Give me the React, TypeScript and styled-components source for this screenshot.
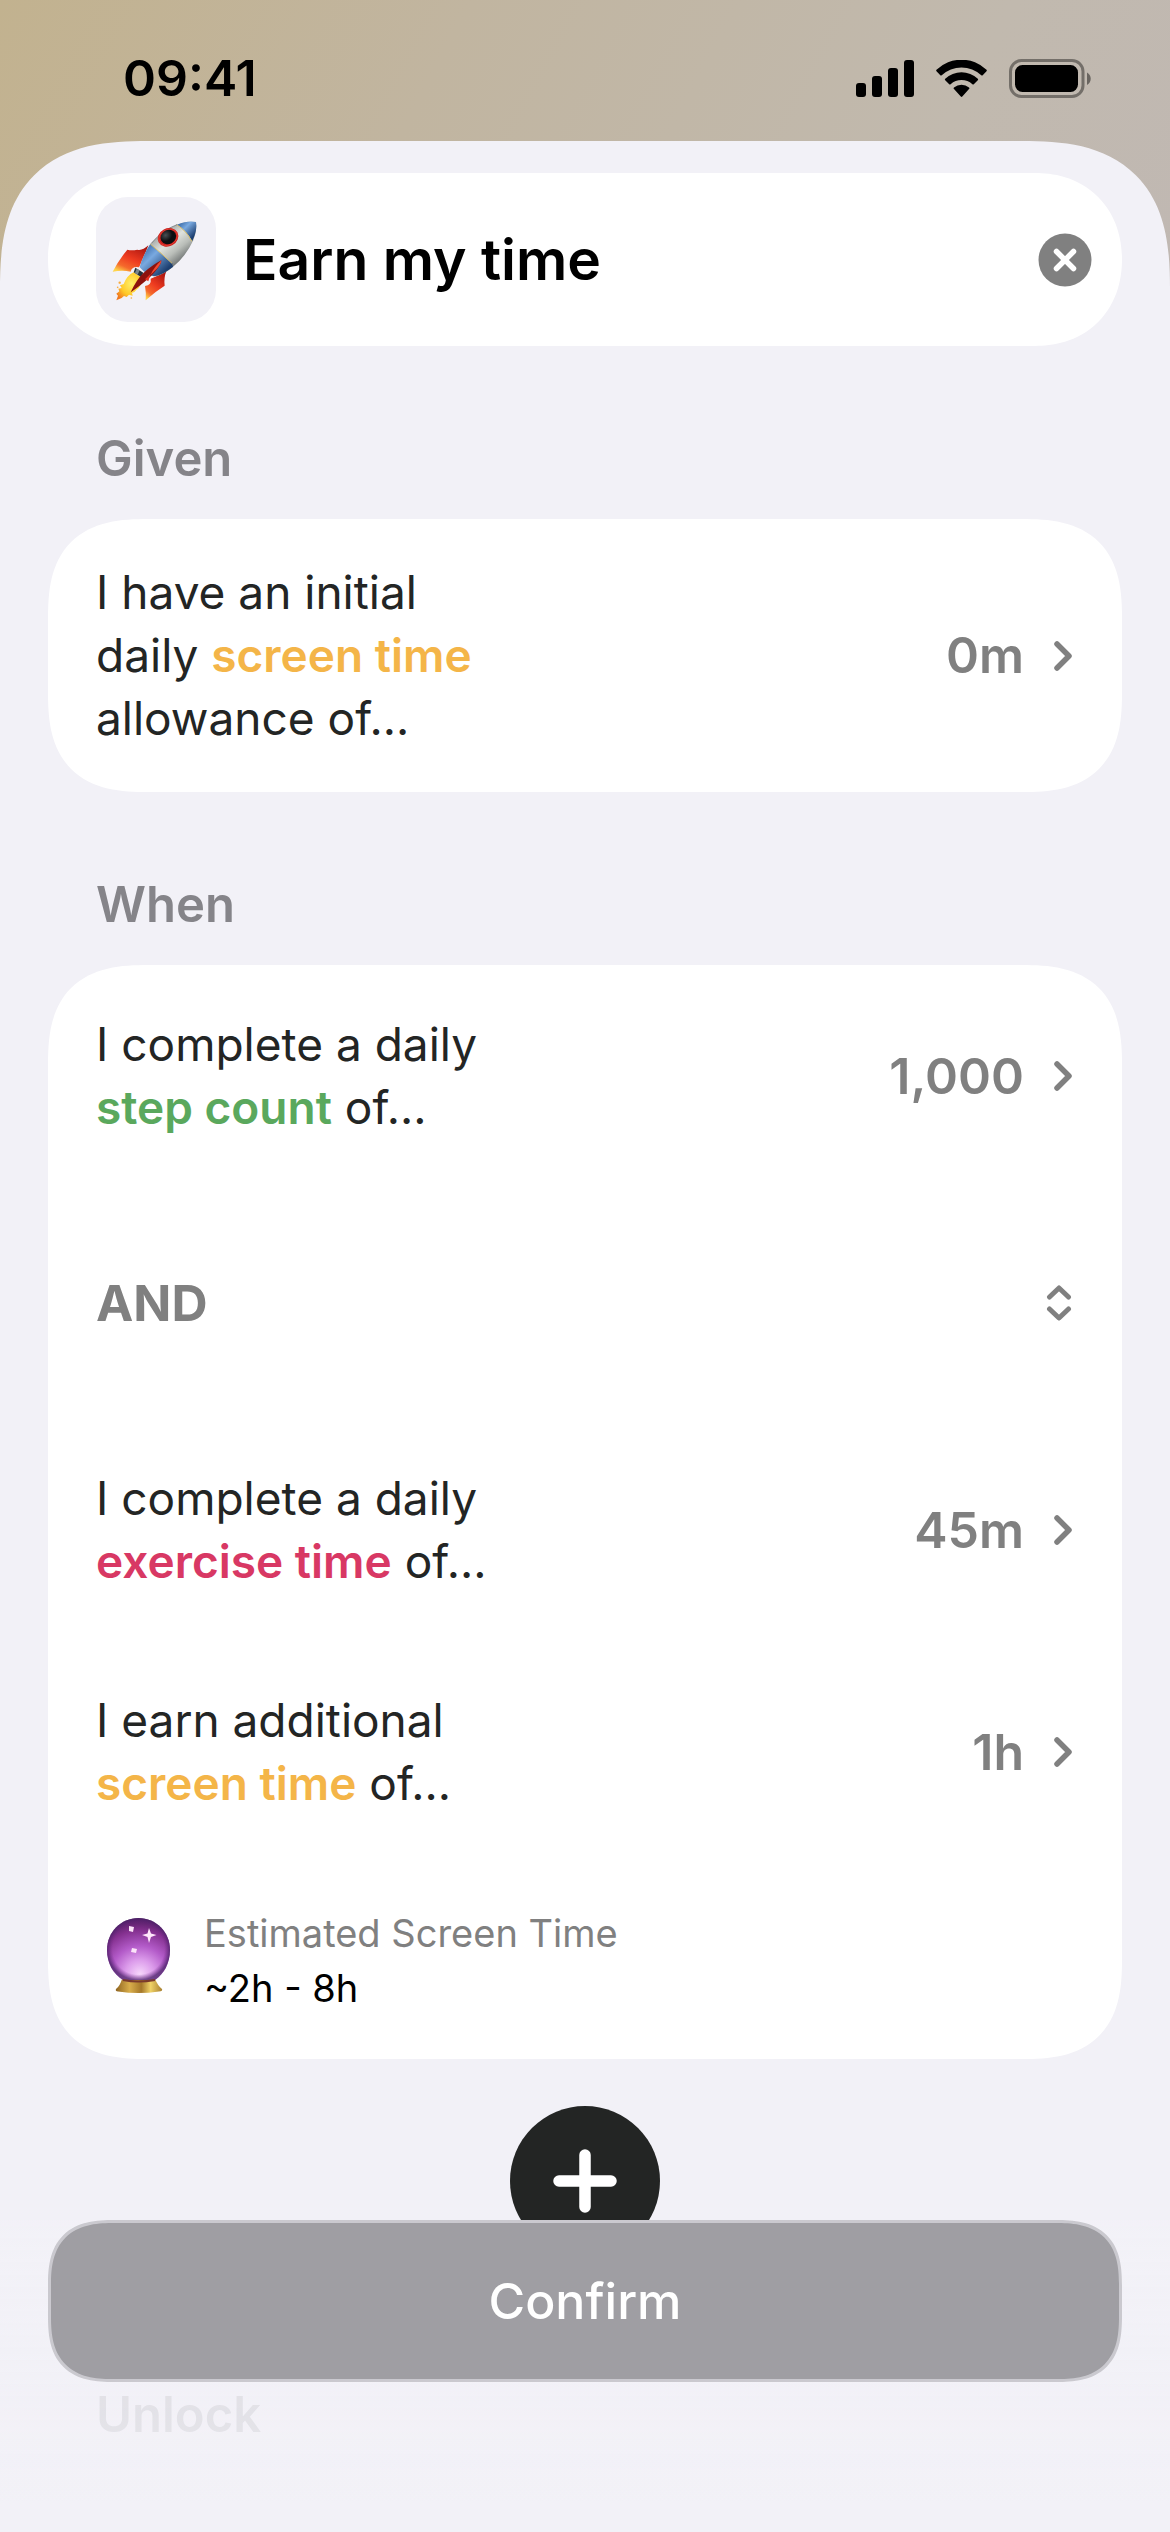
import { useState } from "react";
import type { ReactNode } from "react";
import styled, { createGlobalStyle } from "styled-components";

const GlobalStyle = createGlobalStyle`
  * {
    box-sizing: border-box;
  }

  body {
    margin: 0;
    background-color: #f2f1f7;
    font-family: "Inter", "Liberation Sans", sans-serif;
    -webkit-font-smoothing: antialiased;
  }

  button, input, select {
    margin: 0;
    padding: 0;
    border: none;
    background: none;
    font-family: inherit;
    color: inherit;
  }
`;

const Screen = styled.div`
  display: flex;
  flex-direction: column;
  height: 100vh;
  overflow: hidden;
  background: linear-gradient(118deg, #c2b28f 0%, #c1b5a0 35%, #c1b9ae 75%, #c0b8b3 100%) top / 100% 340px no-repeat;
`;

const StatusBar = styled.header`
  display: flex;
  flex: none;
  align-items: center;
  justify-content: space-between;
  height: 141px;
  padding: 15px 78px 0 123px;
  color: #000000;
`;

const Time = styled.time`
  font-size: 50px;
  font-weight: 600;
  line-height: 61px;
`;

const StatusIcons = styled.div`
  display: flex;
  align-items: center;
  gap: 22px;
`;

const Sheet = styled.main`
  flex: 1;
  min-height: 0;
  overflow: hidden;
  padding: 32px 48px 0;
  border-radius: 112px 112px 0 0;
  background-color: #f2f1f7;

  /* smoother, iOS-like corners where the browser has them */
  @supports (corner-shape: squircle) {
    border-radius: 148px 148px 0 0;
    corner-shape: superellipse(1.4);
  }
`;

const Card = styled.div`
  border-radius: 78px;
  background-color: #ffffff;

  @supports (corner-shape: squircle) {
    border-radius: 100px;
    corner-shape: superellipse(1.4);
  }
`;

const TitleCard = styled(Card)`
  display: flex;
  align-items: center;
  padding: 24px 30px 24px 48px;

  @supports (corner-shape: squircle) {
    corner-shape: superellipse(1.1);
  }
`;

const EmojiButton = styled.button`
  display: flex;
  flex: none;
  align-items: center;
  justify-content: center;
  width: 120px;
  height: 125px;
  border-radius: 32px;
  background-color: #f2f1f7;
`;

const TitleInput = styled.input`
  flex: 1;
  min-width: 0;
  margin-left: 27px;
  color: #000000;
  font-size: 57px;
  font-weight: 600;
  line-height: 72px;
  outline: none;
`;

const ClearButton = styled.button`
  display: flex;
  flex: none;
`;

const SectionTitle = styled.h2`
  margin: 0;
  padding: 82px 48px 30px;
  color: #858489;
  font-size: 49px;
  font-weight: 600;
  line-height: 61px;
`;

const Row = styled.button<{ $padding?: number }>`
  display: flex;
  align-items: center;
  justify-content: space-between;
  width: 100%;
  padding: ${({ $padding = 48 }) => $padding}px 48px;
  text-align: left;
`;

const RowText = styled.span`
  color: #232524;
  font-size: 46px;
  line-height: 63px;
`;

const Highlight = styled.span<{ $color: string }>`
  color: ${({ $color }) => $color};
  font-weight: 600;
`;

const RowValue = styled.span`
  display: flex;
  align-items: center;
  gap: 30px;
  color: #808080;
  font-size: 50px;
  font-weight: 600;
  line-height: 61px;
`;

const OperatorRow = styled.label`
  display: flex;
  align-items: center;
  height: 232px;
  padding: 0 50px 0 48px;
  color: #808080;
`;

const OperatorSelect = styled.select`
  flex: 1;
  appearance: none;
  font-size: 50px;
  font-weight: 700;
  line-height: 61px;
  outline: none;
`;

const Estimate = styled.div`
  display: flex;
  align-items: center;
  gap: 24px;
  padding: 43px 48px;
`;

const EstimateText = styled.p<{ $muted?: boolean }>`
  margin: 0;
  color: ${({ $muted }) => ($muted ? "#808080" : "#000000")};
  font-size: 38px;
  line-height: 55px;
`;

const AddButton = styled.button`
  display: flex;
  align-items: center;
  justify-content: center;
  width: 150px;
  height: 150px;
  margin: 47px auto 46px;
  border-radius: 50%;
  background-color: #232524;
`;

const LockedCard = styled(Card)`
  height: 274px;
`;

const Footer = styled.footer`
  position: fixed;
  right: 0;
  bottom: 0;
  left: 0;
  padding: 0 48px 150px;
  background: linear-gradient(rgba(242, 241, 247, 0.8), rgba(242, 241, 247, 0.87) 70%, #f2f1f7 90%);
`;

const ConfirmButton = styled.button`
  display: block;
  width: 100%;
  height: 162px;
  border: 3px solid #cac9cf;
  border-radius: 52px;
  background-color: #9f9ea3;
  color: #ffffff;
  font-size: 50px;
  font-weight: 500;

  @supports (corner-shape: squircle) {
    border-radius: 66px;
    corner-shape: superellipse(1.4);
  }
`;

const SignalIcon = () => (
  <svg width="58" height="37" viewBox="0 0 58 37" aria-hidden="true">
    <rect x="0" y="23" width="10" height="14" rx="3" />
    <rect x="16" y="16" width="10" height="21" rx="3" />
    <rect x="32" y="8" width="10" height="29" rx="3" />
    <rect x="48" y="0" width="10" height="37" rx="3" />
  </svg>
);

const WifiIcon = () => (
  <svg width="51" height="37" viewBox="0 0 51 37" aria-hidden="true">
    <path d="M.5 11.2a1 1 0 0 1 0-1.4 36 36 0 0 1 50 0 1 1 0 0 1 0 1.4l-3.8 4a1 1 0 0 1-1.400 0 29 29 0 0 0-39.600 0 1 1 0 0 1-1.400 0z" />
    <path d="M9.200 20.200a1 1 0 0 1 0-1.500 24 24 0 0 1 32.600 0 1 1 0 0 1 0 1.500l-4 4a1 1 0 0 1-1.400 0 16.500 16.500 0 0 0-21.800 0 1 1 0 0 1-1.400 0z" />
    <path d="M18 29a1 1 0 0 1 0-1.500 11.800 11.800 0 0 1 15 0 1 1 0 0 1 0 1.500l-6.700 7.500a1 1 0 0 1-1.500 0z" />
  </svg>
);

const BatteryIcon = () => (
  <svg width="83" height="39" viewBox="0 0 83 39" aria-hidden="true">
    <rect x="1.500" y="1.500" width="72.500" height="36" rx="11" fill="none" stroke="#000" strokeOpacity="0.4" strokeWidth="3" />
    <rect x="6" y="6" width="63" height="27" rx="7.500" />
    <path d="M78 13.500c5 2.500 5 10 0 12.500z" fillOpacity="0.45" />
  </svg>
);

const RocketIcon = () => (
  <svg width="89" height="84" viewBox="95 114 267 252" aria-hidden="true">
    <defs>
      <linearGradient id="hull" x1="0.25" y1="0.2" x2="0.75" y2="0.8">
        <stop offset="0" stopColor="#8c9190" />
        <stop offset="0.4" stopColor="#dfe2dd" />
        <stop offset="0.65" stopColor="#b9bdb8" />
        <stop offset="1" stopColor="#555a5b" />
      </linearGradient>
      <linearGradient id="blue" x1="0.1" y1="0.1" x2="0.8" y2="0.8">
        <stop offset="0" stopColor="#3a6aa8" />
        <stop offset="0.4" stopColor="#79a9e0" />
        <stop offset="1" stopColor="#1d3f70" />
      </linearGradient>
      <linearGradient id="fin" x1="0.8" y1="0" x2="0.2" y2="1">
        <stop offset="0" stopColor="#a81410" />
        <stop offset="0.5" stopColor="#ee3b20" />
        <stop offset="0.8" stopColor="#f56a2c" />
        <stop offset="1" stopColor="#ffd44a" />
      </linearGradient>
      <radialGradient id="flame" cx="0.6" cy="0.4" r="0.7">
        <stop offset="0" stopColor="#fff06a" />
        <stop offset="0.6" stopColor="#ffc928" />
        <stop offset="1" stopColor="#f0761f" />
      </radialGradient>
      <radialGradient id="glass" cx="0.4" cy="0.3" r="0.7">
        <stop offset="0" stopColor="#4a5054" />
        <stop offset="0.6" stopColor="#0c0e10" />
      </radialGradient>
    </defs>
    <path d="M204 196Q186 213 171 209Q154 213 141 209Q116 239 97 275Q126 270 151 275Q155 258 176 262Q190 236 204 196Z" fill="url(#fin)" />
    <path d="M235 286Q252 278 258 273Q250 294 253 317Q224 335 196 361Q198 339 194 318Q214 315 211 296Z" fill="url(#fin)" />
    <path d="M160 277L184 293Q186 317 168 329Q162 339 155 338L157 347L146 344L139 351L131 348L124 354L108 361L113 347L108 341L117 334L114 326L124 324L119 316L130 312Q140 286 160 277Z" fill="url(#flame)" />
    <circle cx="118" cy="308" r="3.500" fill="#f9a93a" />
    <circle cx="112" cy="322" r="2.500" fill="#f9a93a" />
    <circle cx="153" cy="354" r="2.500" fill="#f9a93a" />
    <path d="M165 263L189 278L183 292L160 277Z" fill="#26323b" />
    <path d="M169 266L178 271L172 284L164 278Z" fill="#78868e" />
    <path d="M290 134Q325 120 347 126Q352 150 339 181Q316 231 275 263Q247 285 221 289Q198 284 178 262Q188 225 210 192Q250 149 290 134Z" fill="url(#hull)" />
    <path d="M210 192L275 250L278 260Q247 285 221 289Q198 284 178 262Q188 225 210 192Z" fill="url(#blue)" />
    <path d="M290 134Q325 120 347 126Q352 150 336 183Q318 151 290 134Z" fill="url(#blue)" />
    <path d="M210 192Q242 219 275 250M288 134Q318 151 334 184" fill="none" stroke="#d8bd69" strokeWidth="3" />
    <path d="M213 190Q246 150 290 134" fill="none" stroke="#5b6063" strokeWidth="2" />
    <ellipse cx="263" cy="172" rx="32" ry="27" transform="rotate(-28 263 172)" fill="#c9201c" />
    <ellipse cx="263" cy="172" rx="29" ry="23" transform="rotate(-28 263 172)" fill="none" stroke="#f0473a" strokeWidth="2" />
    <ellipse cx="264" cy="171" rx="24" ry="21" transform="rotate(-28 264 171)" fill="url(#glass)" />
    <path d="M243 241Q243 252 229 269Q211 294 151 337Q168 299 190 278Q218 254 243 241Z" fill="#8d120d" />
    <path d="M243 241Q243 252 229 267L211 284Q220 263 243 241Z" fill="#f04a31" />
    <path d="M194 298L211 281L204 304Z" fill="#e53121" />
  </svg>
);

const CrystalBallIcon = () => (
  <svg width="84" height="86" viewBox="0 0 84 86" aria-hidden="true">
    <defs>
      <radialGradient id="ball" cx="0.52" cy="0.9" r="0.9">
        <stop offset="0" stopColor="#f6d6fb" />
        <stop offset="0.25" stopColor="#dc9ceb" />
        <stop offset="0.5" stopColor="#b35bc9" />
        <stop offset="0.78" stopColor="#84308f" />
        <stop offset="1" stopColor="#4c1c5e" />
      </radialGradient>
      <radialGradient id="rim" cx="0.5" cy="0.5" r="0.5">
        <stop offset="0.82" stopColor="#6b2585" stopOpacity="0" />
        <stop offset="1" stopColor="#4a2268" stopOpacity="0.75" />
      </radialGradient>
      <linearGradient id="stand" x1="0" x2="1">
        <stop offset="0" stopColor="#8f6420" />
        <stop offset="0.3" stopColor="#d9ae4b" />
        <stop offset="0.55" stopColor="#a5782a" />
        <stop offset="0.75" stopColor="#f0d267" />
        <stop offset="1" stopColor="#a98030" />
      </linearGradient>
    </defs>
    <path d="M26 61h33q3 7 7 10q1 2-3 2.500q-20 3-41 0q-3-.5-2-2.500q4-3 6-10z" fill="url(#stand)" />
    <path d="M42.500 0C60 0 74 14 74 32c0 13-6 24-15 30H27C17 56 11 45 11 32 11 14 25 0 42.500 0z" fill="url(#ball)" />
    <path d="M42.500 0C60 0 74 14 74 32c0 13-6 24-15 30H27C17 56 11 45 11 32 11 14 25 0 42.500 0z" fill="url(#rim)" />
    <path d="M27 62q15 3 32 0" fill="none" stroke="#7b3a2c" strokeWidth="2" />
    <path d="M53 10l2 5.500 5.500 1.500-5.500 2-2 6-1.500-6-5.500-2 5.500-1.500z" fill="#ffe6fb" />
    <path d="M33 8l5 1-1 5-4-1zM36 30l5 1-1 4-5-1z" fill="#fbe3f8" />
  </svg>
);

const ChevronRight = () => (
  <svg width="20" height="30" viewBox="0 0 20 30" fill="none" aria-hidden="true">
    <path d="M3 3l12 12L3 27" stroke="#808080" strokeWidth="5.500" strokeLinecap="round" strokeLinejoin="round" />
  </svg>
);

const ChevronUpDown = () => (
  <svg width="26" height="36" viewBox="0 0 26 36" fill="none" aria-hidden="true">
    <path d="M3.500 12L13 3l9.500 9M3.500 24l9.500 9 9.500-9" stroke="#808080" strokeWidth="5" strokeLinecap="round" strokeLinejoin="round" />
  </svg>
);

const ClearIcon = () => (
  <svg width="54" height="54" viewBox="0 0 54 54" aria-hidden="true">
    <circle cx="27" cy="27" r="26.500" fill="#808080" />
    <path d="M18.500 18.500l17 17M35.500 18.500l-17 17" stroke="#fff" strokeWidth="5.500" strokeLinecap="round" />
  </svg>
);

const PlusIcon = () => (
  <svg width="64" height="64" viewBox="0 0 64 64" aria-hidden="true">
    <path d="M32 6v52M6 32h52" stroke="#fff" strokeWidth="11.500" strokeLinecap="round" />
  </svg>
);

type ConditionProps = {
  children: ReactNode;
  value: string;
  padding?: number;
};

const Condition = ({ children, value, padding }: ConditionProps) => (
  <Row type="button" $padding={padding}>
    <RowText>{children}</RowText>
    <RowValue>
      {value}
      <ChevronRight />
    </RowValue>
  </Row>
);

const App = () => {
  const [title, setTitle] = useState("Earn my time");
  const [operator, setOperator] = useState("AND");

  return (
    <Screen>
      <GlobalStyle />
      <StatusBar>
        <Time>09:41</Time>
        <StatusIcons>
          <SignalIcon />
          <WifiIcon />
          <BatteryIcon />
        </StatusIcons>
      </StatusBar>
      <Sheet>
        <TitleCard>
          <EmojiButton type="button" aria-label="Icon">
            <RocketIcon />
          </EmojiButton>
          <TitleInput aria-label="Name" value={title} onChange={(e) => setTitle(e.target.value)} />
          <ClearButton type="button" aria-label="Clear" onClick={() => setTitle("")}>
            <ClearIcon />
          </ClearButton>
        </TitleCard>

        <SectionTitle>Given</SectionTitle>
        <Card>
          <Condition value="0m" padding={42}>
            I have an initial
            <br />
            daily <Highlight $color="#f4b548">screen time</Highlight>
            <br />
            allowance of...
          </Condition>
        </Card>

        <SectionTitle>When</SectionTitle>
        <Card>
          <Condition value="1,000">
            I complete a daily
            <br />
            <Highlight $color="#5aa85d">step count</Highlight> of...
          </Condition>
          <OperatorRow>
            <OperatorSelect aria-label="Operator" value={operator} onChange={(e) => setOperator(e.target.value)}>
              <option>AND</option>
              <option>OR</option>
            </OperatorSelect>
            <ChevronUpDown />
          </OperatorRow>
          <Condition value="45m">
            I complete a daily
            <br />
            <Highlight $color="#d83864">exercise time</Highlight> of...
          </Condition>
          <Condition value="1h">
            I earn additional
            <br />
            <Highlight $color="#f4b548">screen time</Highlight> of...
          </Condition>
          <Estimate>
            <CrystalBallIcon />
            <div>
              <EstimateText $muted>Estimated Screen Time</EstimateText>
              <EstimateText>~2h - 8h</EstimateText>
            </div>
          </Estimate>
        </Card>

        <AddButton type="button" aria-label="Add condition">
          <PlusIcon />
        </AddButton>

        <SectionTitle>Unlock</SectionTitle>
        <LockedCard />
      </Sheet>
      <Footer>
        <ConfirmButton type="button">Confirm</ConfirmButton>
      </Footer>
    </Screen>
  );
};

export default App;
